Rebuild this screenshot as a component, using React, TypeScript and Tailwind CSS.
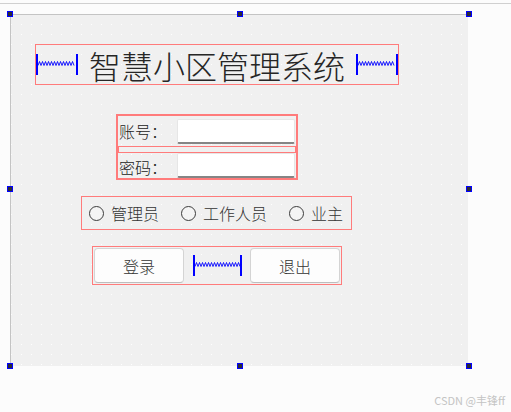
import React from "react";

const cjk = "font-['Noto_Sans_CJK_SC','Noto_Sans',sans-serif]";

// Designer-style horizontal spacer: blue end bars with a spring between them
function Spring({ width }: { width: number }) {
  const h = 21;
  const top = 7.5;
  const bottom = 11.5;
  let d = `M2 ${bottom}`;
  for (let x = 2; x + 3 <= width - 2; x += 3) {
    d += ` L${x + 1.5} ${top} L${x + 3} ${bottom}`;
  }
  return (
    <svg width={width} height={h} className="block shrink-0">
      <rect x={0} y={0} width={2} height={h} fill="#0000ff" />
      <rect x={width - 2} y={0} width={2} height={h} fill="#0000ff" />
      <path d={d} fill="none" stroke="#0000ff" strokeWidth={0.9} />
    </svg>
  );
}

function Handle({ className }: { className: string }) {
  return <div className={`absolute h-[6px] w-[6px] border border-[#0000ff] bg-[#2a2a38] ${className}`} />;
}

function Field() {
  return <div className="h-full w-[118px] rounded-[2px] border border-[#e6e6e6] border-b-2 border-b-[#858585] bg-white" />;
}

function Radio({ label }: { label: string }) {
  return (
    <div className="flex items-center gap-[7px]">
      <span className="h-[15px] w-[15px] rounded-full border border-[#3c3c3c] bg-[#f4f4f4]" />
      <span className="text-[16px] font-light leading-none text-[#333]">{label}</span>
    </div>
  );
}

function PushButton({ label }: { label: string }) {
  return (
    <button className="flex h-[35px] w-[90px] items-center justify-center rounded-[4px] border border-[#d4d4d4] border-b-[#bdbdbd] bg-[#fdfdfd] text-[16px] font-light leading-none text-[#333]">
      {label}
    </button>
  );
}

export default function App() {
  return (
    <div className={`h-[412px] w-[511px] overflow-hidden bg-[#fcfcfc] ${cjk}`}>
      <div className="h-[3px]" />
      <div className="h-px bg-[#d0d0d0]" />

      <div className="relative ml-[10px] mt-[10px] flex h-[352px] w-[458px] flex-col items-start border-l border-t border-[#c4c4c4] bg-[#f0f0f0] bg-[radial-gradient(circle_at_0.5px_9.5px,#ffffff_0.7px,transparent_0.9px)] bg-[length:10px_10px]">
        {/* title row */}
        <div className="ml-[24px] mt-[29px] flex h-[41px] w-[364px] items-center justify-between border border-[#ff7b7b]">
          <Spring width={42} />
          <span className="text-[32px] font-light leading-none text-[#262626]">智慧小区管理系统</span>
          <Spring width={42} />
        </div>

        {/* account / password */}
        <div className="ml-[105px] mt-[29px] flex h-[66px] w-[182px] flex-col border-2 border-[#ff7b7b]">
          <div className="flex h-[30px] items-center pl-[1px] pr-[1px]">
            <span className="text-[16px] font-light leading-none text-[#222]">账号：</span>
            <div className="ml-auto h-[25px]">
              <Field />
            </div>
          </div>
          <div className="h-[7px] border border-[#ff7b7b]" />
          <div className="flex flex-1 items-end pl-[1px] pr-[1px]">
            <span className="mb-[3px] text-[16px] font-light leading-none text-[#222]">密码：</span>
            <div className="ml-auto h-[25px]">
              <Field />
            </div>
          </div>
        </div>

        {/* role */}
        <div className="ml-[70px] mt-[16px] flex h-[34px] w-[271px] items-center gap-[22px] border border-[#ff7b7b] pl-[7px]">
          <Radio label="管理员" />
          <Radio label="工作人员" />
          <Radio label="业主" />
        </div>

        {/* actions */}
        <div className="ml-[81px] mt-[16px] flex h-[39px] w-[250px] items-center justify-between border border-[#ff7b7b] px-[1px]">
          <PushButton label="登录" />
          <Spring width={49} />
          <PushButton label="退出" />
        </div>

        <Handle className="-left-[4px] -top-[4px]" />
        <Handle className="left-1/2 -top-[4px] -translate-x-1/2" />
        <Handle className="-right-[4px] -top-[4px]" />
        <Handle className="-left-[4px] top-[171px]" />
        <Handle className="-right-[4px] top-[171px]" />
        <Handle className="-bottom-[3px] -left-[4px]" />
        <Handle className="-bottom-[3px] left-1/2 -translate-x-1/2" />
        <Handle className="-bottom-[3px] -right-[4px]" />
      </div>

      <div className="mt-[27px] flex justify-end pr-[6px] text-[11px] leading-[14px] text-[#c4c4c4]">CSDN @丰锋ff</div>
    </div>
  );
}
